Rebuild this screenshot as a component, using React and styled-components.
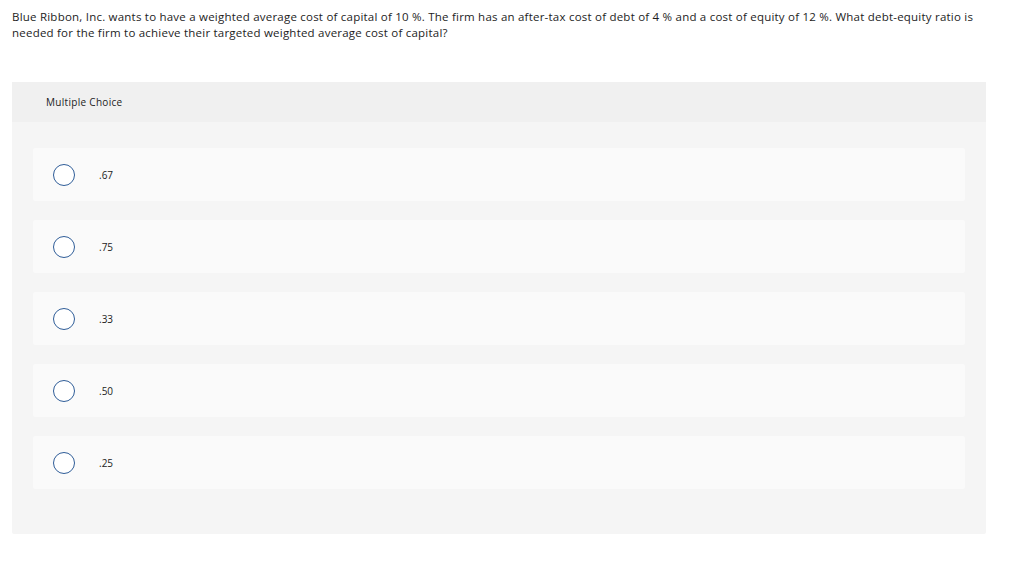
import React from "react";
import styled, { createGlobalStyle } from "styled-components";

const options = [".67", ".75", ".33", ".50", ".25"];

const GlobalStyle = createGlobalStyle`
  html, body {
    margin: 0;
    padding: 0;
    background: #ffffff;
  }
  body {
    font-family: "Open Sans", "Liberation Sans", sans-serif;
    color: #1a1a1a;
  }
`;

const Page = styled.div`
  padding: 9px 38px 30px 12px;
`;

const Question = styled.p`
  margin: 0 0 41px;
  font-size: 11.5px;
  line-height: 16px;
  letter-spacing: 0.22px;
  color: #1d1d1d;
`;

const Panel = styled.div`
  background: #f5f5f5;
  border-radius: 2px;
  padding-bottom: 45px;
`;

const Header = styled.div`
  height: 40px;
  display: flex;
  align-items: center;
  padding-left: 34px;
  background: #f0f0f0;
  font-size: 10px;
  letter-spacing: 0.3px;
  color: #222;
`;

const List = styled.div`
  display: flex;
  flex-direction: column;
  gap: 19px;
  padding: 26px 21px 0;
`;

const Option = styled.label`
  height: 53px;
  display: flex;
  align-items: center;
  gap: 24px;
  padding-left: 20px;
  background: #fafafa;
  border-radius: 2px;
  font-size: 10px;
  color: #222;
`;

const Radio = styled.span`
  width: 20px;
  height: 20px;
  border: 1px solid #2f5d98;
  border-radius: 50%;
  background: #fff;
  flex-shrink: 0;
`;

export default function App() {
  return (
    <>
      <GlobalStyle />
      <Page>
        <Question>
          Blue Ribbon, Inc. wants to have a weighted average cost of capital of 10 %. The firm has an after-tax cost of debt of 4 % and a cost of equity of 12 %. What debt-equity ratio is needed for the firm to achieve their targeted weighted average cost of capital?
        </Question>
        <Panel>
          <Header>Multiple Choice</Header>
          <List>
            {options.map((o) => (
              <Option key={o}>
                <Radio />
                {o}
              </Option>
            ))}
          </List>
        </Panel>
      </Page>
    </>
  );
}
